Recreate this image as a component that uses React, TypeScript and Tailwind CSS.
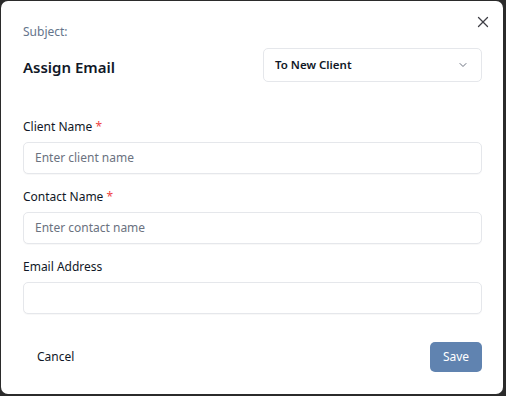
import React from "react";

function ChevronDown() {
  return (
    <svg width="12" height="12" viewBox="0 0 24 24" fill="none" stroke="#6b7280" strokeWidth="2" strokeLinecap="round" strokeLinejoin="round">
      <path d="m6 9 6 6 6-6" />
    </svg>
  );
}

function XIcon() {
  return (
    <svg width="18" height="18" viewBox="0 0 24 24" fill="none" stroke="#3f3f46" strokeWidth="1.7" strokeLinecap="round" strokeLinejoin="round">
      <path d="M18 6 6 18" />
      <path d="m6 6 12 12" />
    </svg>
  );
}

function Field({ label, required, placeholder }: { label: string; required?: boolean; placeholder?: string }) {
  return (
    <div className="flex flex-col">
      <label className="text-[12px] leading-[16px] text-[#111827] pt-[1px] mb-[7px]">
        {label}
        {required && <span className="text-[#ef4444]"> *</span>}
      </label>
      <div className="h-[32px] rounded-[5px] border border-[#e5e7eb] bg-white shadow-[0_1px_1px_rgba(0,0,0,0.03)] flex items-center px-[11px]">
        <span className="text-[12px] text-[#6b7280]">{placeholder}</span>
      </div>
    </div>
  );
}

export default function App() {
  return (
    <div
      className="w-[506px] h-[396px] bg-[#2b2b2b] pt-[1px] pl-[1px] pr-[3px] pb-[2px]"
      style={{ fontFamily: '"Noto Sans", "Open Sans", sans-serif' }}
    >
      <div className="relative h-full bg-white rounded-[7px] pl-[22px] pr-[21px] pt-[23px] flex flex-col">
        <button className="absolute top-[12px] right-[11px] w-[18px] h-[18px] flex items-center justify-center">
          <XIcon />
        </button>
        <div className="text-[12px] leading-[16px] text-[#64748b]">Subject:</div>
        <div className="mt-2 flex items-center justify-between">
          <div className="text-[15px] font-semibold text-[#111827] pt-[4px]">Assign Email</div>
          <div className="w-[219px] h-[34px] rounded-[5px] border border-[#e5e7eb] flex items-center justify-between pl-[11px] pr-[12px]">
            <span className="text-[11.5px] font-semibold text-[#111827]">To New Client</span>
            <ChevronDown />
          </div>
        </div>
        <div className="mt-[36px] flex flex-col gap-[14px]">
          <Field label="Client Name" required placeholder="Enter client name" />
          <Field label="Contact Name" required placeholder="Enter contact name" />
          <Field label="Email Address" placeholder="" />
        </div>
        <div className="mt-[28px] flex items-center justify-between">
          <button className="h-[30px] px-[14px] text-[12px] text-[#111827] rounded-[5px]">Cancel</button>
          <button className="h-[30px] w-[52px] rounded-[5px] bg-[#6083b0] text-white text-[12px]">Save</button>
        </div>
      </div>
    </div>
  );
}
